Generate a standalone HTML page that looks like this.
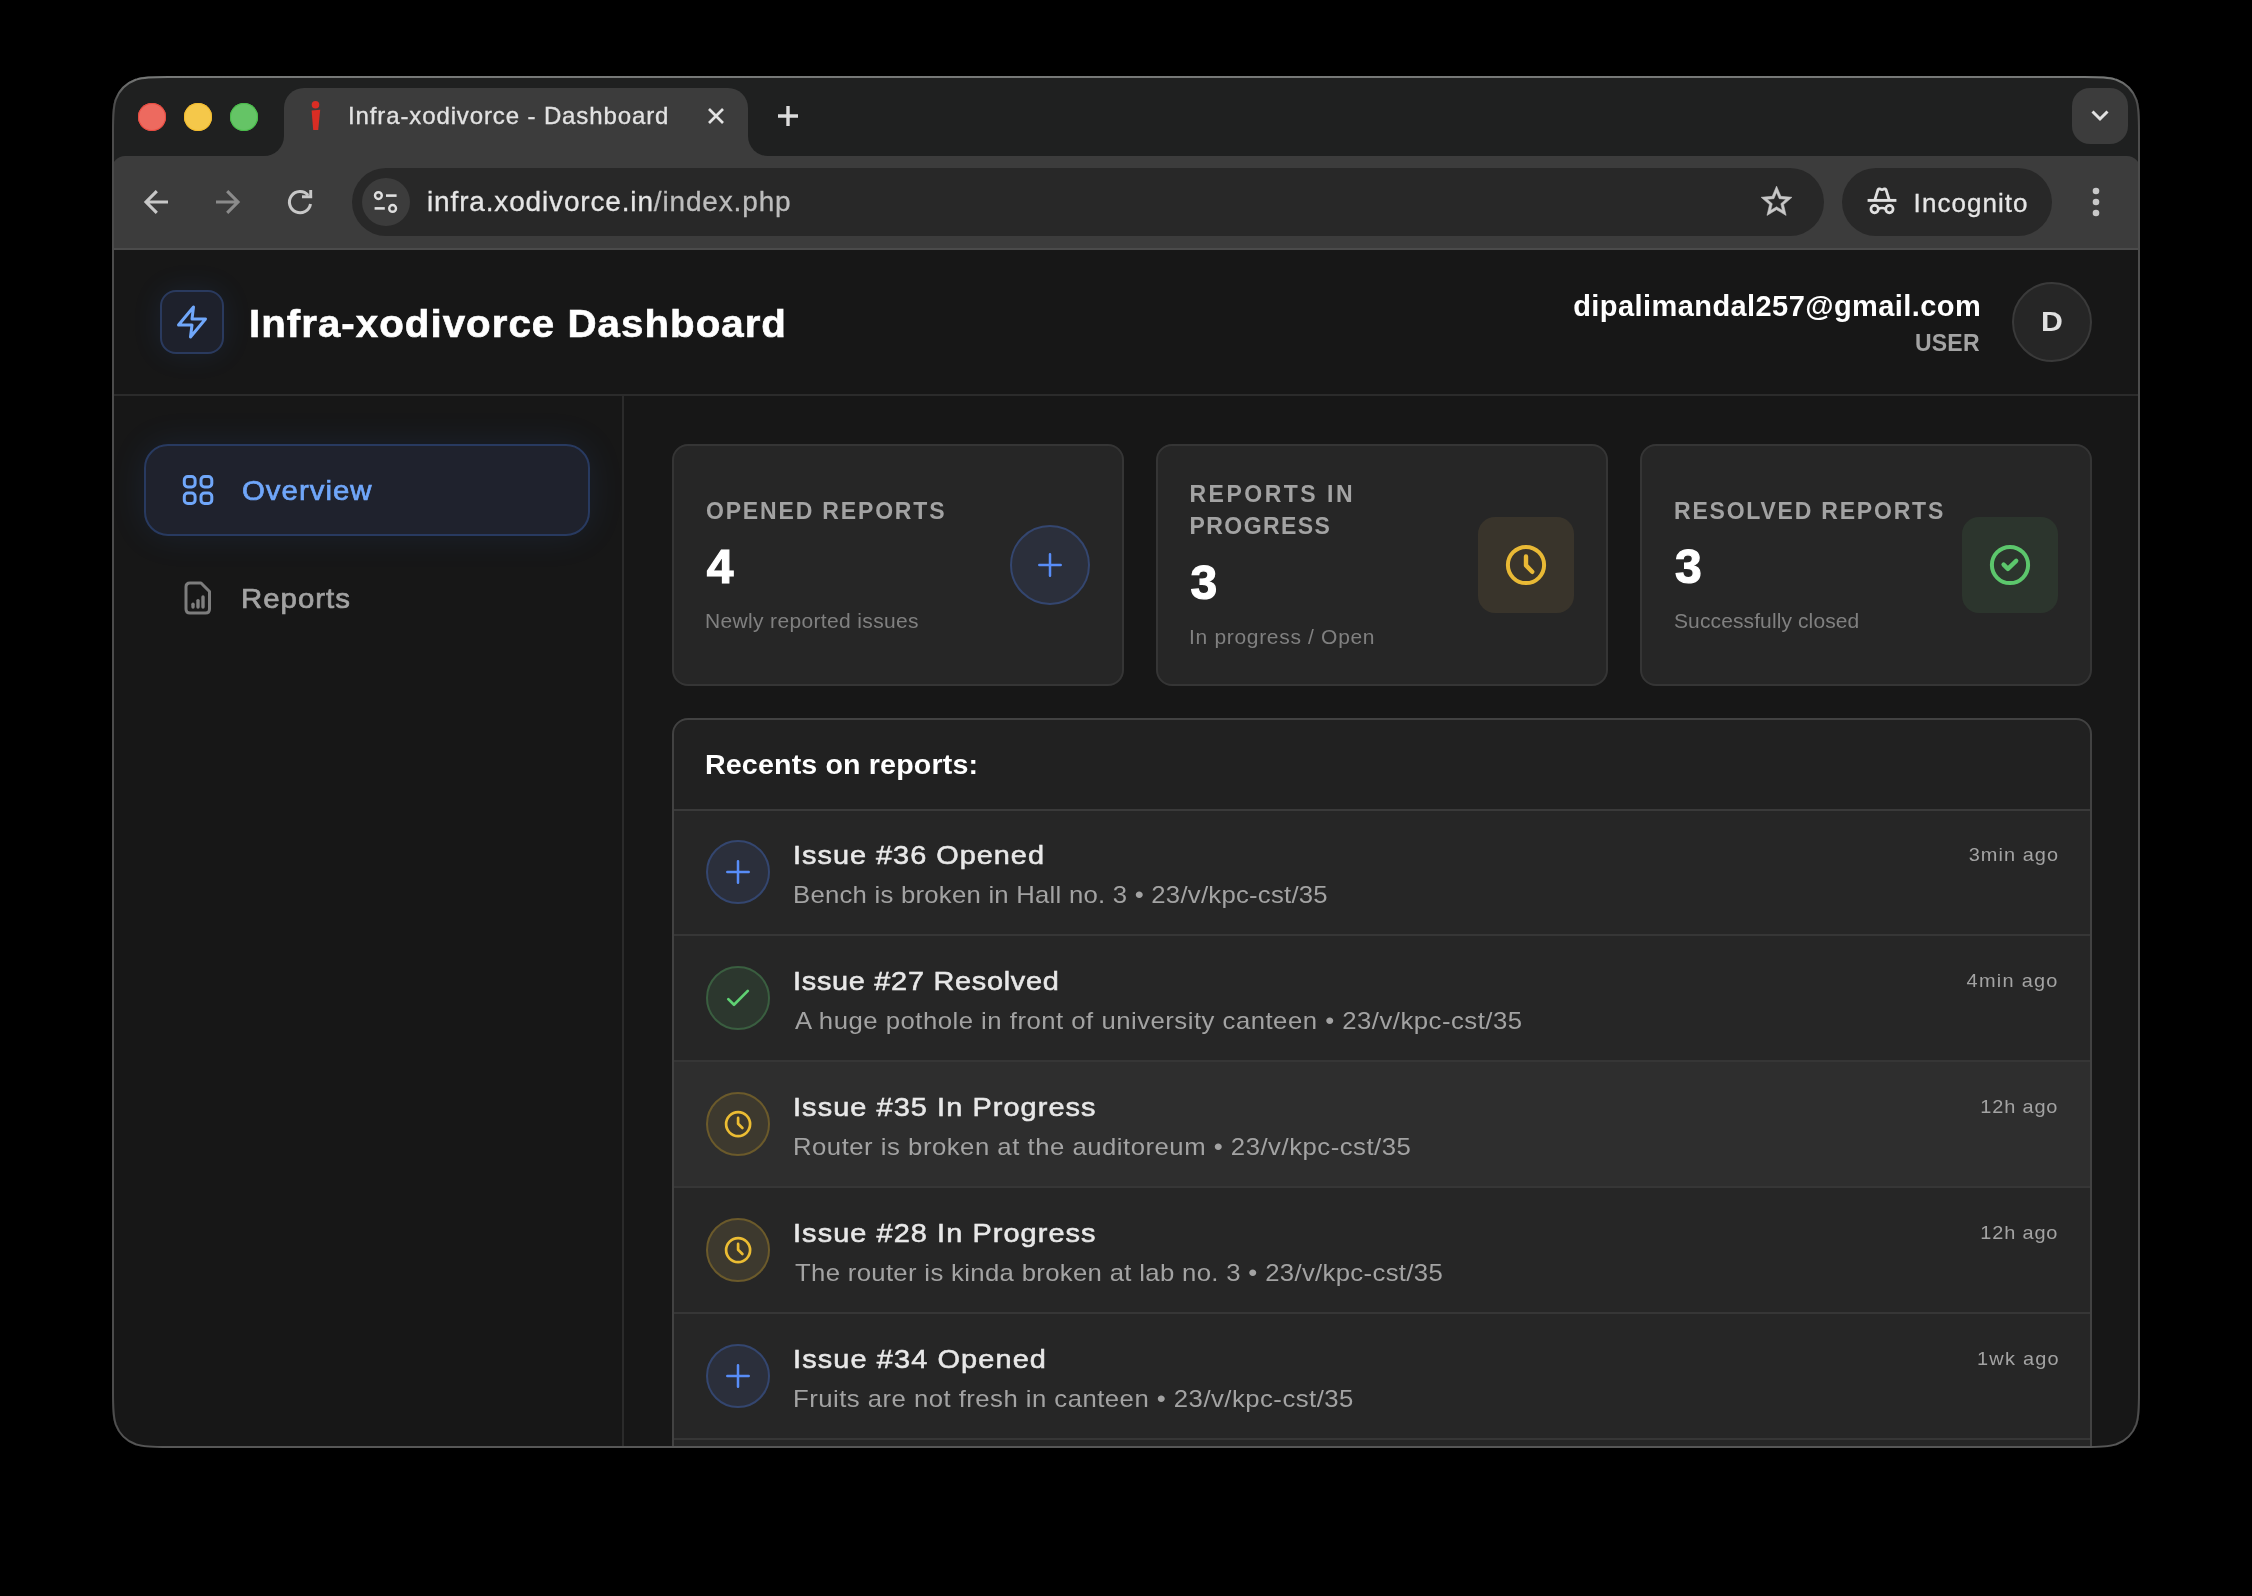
<!DOCTYPE html>
<html lang="en">
<head>
<meta charset="utf-8">
<title>Infra-xodivorce - Dashboard</title>
<style>
*{box-sizing:border-box;margin:0;padding:0}
html,body{width:2252px;height:1596px;background:#000;overflow:hidden}
body{font-family:"Liberation Sans",sans-serif;position:relative;color:#fff}
.t{position:absolute;white-space:nowrap;line-height:1;transform-origin:0 50%}
.r{position:absolute;white-space:nowrap;line-height:1;text-align:right;transform-origin:100% 50%}
svg{position:absolute;overflow:visible}
#win{position:absolute;left:112px;top:76px;width:2028px;height:1372px;background:#171717;overflow:hidden;clip-path:path('M56.56 0.00L1971.44 0.00C1987.73 0.00 1995.87 0.00 2003.21 2.42L2004.63 2.77C2014.21 6.26 2021.74 13.79 2025.23 23.37L2025.58 24.79C2028.00 32.13 2028.00 40.27 2028.00 56.56L2028.00 1315.44C2028.00 1331.73 2028.00 1339.87 2025.58 1347.21L2025.23 1348.63C2021.74 1358.21 2014.21 1365.74 2004.63 1369.23L2003.21 1369.58C1995.87 1372.00 1987.73 1372.00 1971.44 1372.00L56.56 1372.00C40.27 1372.00 32.13 1372.00 24.79 1369.58L23.37 1369.23C13.79 1365.74 6.26 1358.21 2.77 1348.63L2.42 1347.21C0.00 1339.87 0.00 1331.73 0.00 1315.44L0.00 56.56C0.00 40.27 0.00 32.13 2.42 24.79L2.77 23.37C6.26 13.79 13.79 6.26 23.37 2.77L24.79 2.42C32.13 0.00 40.27 0.00 56.56 0.00Z')}
#o{position:absolute;left:-112px;top:-76px;width:2252px;height:1596px;will-change:transform}
#o div{position:absolute}
#titlebar{left:112px;top:76px;width:2028px;height:90px;background:#1f2020}
#toolbar{left:112px;top:156px;width:2028px;height:94px;background:#3c3c3c;border-radius:13px 13px 0 0}
#tbline{left:112px;top:248px;width:2028px;height:2px;background:#4b4b4b}
#tab{left:284px;top:88px;width:464px;height:70px;background:#3c3c3c;border-radius:20px 20px 0 0}
.flare{top:136px;width:20px;height:20px;background:#3c3c3c}
.flare i{position:absolute;left:0;top:0;width:20px;height:20px;background:#1f2020}
#fl{left:264px}#fl i{border-radius:0 0 20px 0}
#fr{left:748px}#fr i{border-radius:0 0 0 20px}
.dot{top:102.8px;width:28px;height:28px;border-radius:50%}
#url{left:352px;top:168px;width:1472px;height:68px;border-radius:34px;background:#282828}
#site{left:362px;top:178px;width:48px;height:48px;border-radius:24px;background:#3c3c3c}
#incog{left:1842px;top:168px;width:210px;height:68px;border-radius:34px;background:#282828}
#dd{left:2072px;top:88px;width:56px;height:56px;border-radius:18px;background:#3c3c3c}
#page{left:112px;top:250px;width:2028px;height:1200px;background:#171717}
.ln{background:#2b2b2b}
.card{background:#262626;border:2px solid #353535;border-radius:16px}
.row{left:674px;width:1416px;height:124px;background:#262626}
.dv{left:674px;width:1416px;height:2px;background:#363636}
.ic{width:64px;height:64px;border-radius:50%;left:706px;border:2px solid}
.ib{background:#2b2f3b;border-color:#34466f}
.ig{background:#2c372e;border-color:#3a5e40}
.iy{background:#3d392e;border-color:#6b5a2b}
</style>
</head>
<body>
<div id="win"><div id="o">
  <div id="titlebar"></div>
  <div id="toolbar"></div>
  <div id="tbline"></div>
  <div class="flare" id="fl"><i></i></div>
  <div class="flare" id="fr"><i></i></div>
  <div id="tab"></div>
  <div class="dot" style="left:138px;background:#ed6a5f;box-shadow:inset 0 0 0 1px #e9493f"></div>
  <div class="dot" style="left:184px;background:#f5c84a;box-shadow:inset 0 0 0 1px #f2ba2c"></div>
  <div class="dot" style="left:230px;background:#65c466;box-shadow:inset 0 0 0 1px #48bd49"></div>
  <div id="url"></div>
  <div id="site"></div>
  <div id="incog"></div>
  <div id="dd"></div>
  <!-- tab contents -->
  <svg style="left:303px;top:95px" width="24" height="40" viewBox="0 0 24 40"><circle cx="12.5" cy="9.7" r="3.8" fill="#da2d24"/><path d="M8.6 15.6 L17.2 14.8 L15.2 35.1 L10.2 35.1 Z" fill="#da2d24"/></svg>
  <svg style="left:707px;top:106.7px" width="18" height="18" viewBox="0 0 18 18"><path d="M2 2 L16 16 M16 2 L2 16" stroke="#e2e2e2" stroke-width="2.7" fill="none"/></svg>
  <svg style="left:777px;top:104.7px" width="22" height="22" viewBox="0 0 22 22"><path d="M11 1 V21 M1 11 H21" stroke="#dcdcdc" stroke-width="3.4" fill="none"/></svg>
  <svg style="left:2088px;top:107px" width="24" height="18" viewBox="0 0 24 18"><path d="M4.5 4.5 L12 12 L19.5 4.5" stroke="#e2e2e2" stroke-width="3" fill="none"/></svg>
  <!-- nav icons -->
  <svg style="left:142px;top:188px" width="28" height="28" viewBox="0 0 28 28"><path d="M26 14 H4.5 M14.8 3.2 L4 14 L14.8 24.8" stroke="#c8c8c8" stroke-width="3.1" fill="none"/></svg>
  <svg style="left:214px;top:188px" width="28" height="28" viewBox="0 0 28 28"><path d="M2 14 H23.5 M13.2 3.2 L24 14 L13.2 24.8" stroke="#8b8b8b" stroke-width="3.1" fill="none"/></svg>
  <svg style="left:286px;top:188px" width="28" height="28" viewBox="0 0 28 28"><path d="M22.1 7.3 A10.6 10.6 0 1 0 24.5 16" stroke="#c8c8c8" stroke-width="3" fill="none"/><path d="M24.7 2 V10.2 M16 8.8 H26.2" stroke="#c8c8c8" stroke-width="2.9" fill="none"/></svg>
  <!-- site info icon -->
  <svg style="left:372.3px;top:188.4px" width="28" height="28" viewBox="0 0 28 28"><circle cx="6.4" cy="7.6" r="3.4" stroke="#e0e0e0" stroke-width="2.4" fill="none"/><path d="M14 7.6 H24.6" stroke="#e0e0e0" stroke-width="2.6"/><path d="M2.6 20.4 H12.8" stroke="#e0e0e0" stroke-width="2.6"/><circle cx="20.6" cy="20.4" r="3.4" stroke="#e0e0e0" stroke-width="2.4" fill="none"/></svg>
  <!-- star -->
  <svg style="left:1757.6px;top:183.2px" width="37.1" height="37.1" viewBox="0 0 24 24"><path d="M22 9.24l-7.19-.62L12 2 9.19 8.63 2 9.24l5.46 4.73L5.82 21 12 17.27 18.18 21l-1.63-7.03L22 9.24zM12 15.4l-3.76 2.27 1-4.28-3.32-2.88 4.38-.38L12 6.1l1.71 4.04 4.38.38-3.32 2.88 1 4.28L12 15.4z" fill="#c8c8c8" stroke="#c8c8c8" stroke-width="0.35"/></svg>
  <!-- incognito -->
  <svg style="left:1866px;top:186px" width="32" height="30" viewBox="0 0 32 30"><path d="M8.8 14.2 L12 3.7 Q12.4 2.5 13.6 2.9 L15.2 3.5 Q16 3.8 16.8 3.5 L18.4 2.9 Q19.6 2.5 20 3.7 L23.2 14.2" stroke="#e0e0e0" stroke-width="2.8" fill="none"/><path d="M1.6 14.4 H30.4" stroke="#e0e0e0" stroke-width="2.9"/><circle cx="8.6" cy="23.1" r="3.7" stroke="#e0e0e0" stroke-width="2.7" fill="none"/><circle cx="23.4" cy="23.1" r="3.7" stroke="#e0e0e0" stroke-width="2.7" fill="none"/><path d="M12.3 22.7 Q16 21.3 19.7 22.7" stroke="#e0e0e0" stroke-width="2.6" fill="none"/></svg>
  <!-- menu dots -->
  <svg style="left:2088px;top:182px" width="16" height="40" viewBox="0 0 16 40"><circle cx="8" cy="9" r="3.3" fill="#c8c8c8"/><circle cx="8" cy="20" r="3.3" fill="#c8c8c8"/><circle cx="8" cy="31" r="3.3" fill="#c8c8c8"/></svg>
  <div id="page"></div>
  <!-- header -->
  <div class="ln" style="left:112px;top:394px;width:2028px;height:2px"></div>
  <div class="ln" style="left:622px;top:396px;width:2px;height:1060px"></div>
  <div style="left:160px;top:290px;width:64px;height:64px;border-radius:16px;background:#1e212c;border:2px solid #2a3a5e;box-shadow:0 0 30px rgba(59,130,246,0.10)"></div>
  <svg style="left:174px;top:304px" width="36" height="36" viewBox="0 0 24 24"><path d="M13 2 L3 14 H12 L11 22 L21 10 H12 Z" stroke="#70a7fa" stroke-width="2" fill="none" stroke-linejoin="round" stroke-linecap="round"/></svg>
  <div style="left:2012px;top:282px;width:80px;height:80px;border-radius:50%;background:#262626;border:2px solid #3a3a3a"></div>
  <!-- sidebar -->
  <div style="left:144px;top:444px;width:446px;height:92px;border-radius:24px;background:#1f222d;border:2px solid #283a60;box-shadow:0 0 36px rgba(59,130,246,0.10)"></div>
  <svg style="left:181px;top:473px" width="34" height="34" viewBox="0 0 34 34"><g stroke="#70a7fa" stroke-width="3" fill="none"><rect x="3.3" y="3.5" width="10.8" height="10.4" rx="3.5"/><rect x="20" y="3.5" width="10.8" height="10.4" rx="3.5"/><rect x="3.3" y="20" width="10.8" height="10.4" rx="3.5"/><rect x="20" y="20" width="10.8" height="10.4" rx="3.5"/></g></svg>
  <svg style="left:180px;top:580px" width="36" height="36" viewBox="0 0 36 36"><g stroke="#7d7d7d" stroke-width="3" fill="none" stroke-linejoin="round" stroke-linecap="round"><path d="M10 3 H21 L29.5 11.5 V29 Q29.5 33 25.5 33 H10 Q6 33 6 29 V7 Q6 3 10 3 Z"/></g><g stroke="#7f7f7f" stroke-width="3.4" stroke-linecap="round"><path d="M13 27 V24.2"/><path d="M18 27 V20.6"/><path d="M23 27 V17"/></g></svg>
  <!-- stat cards -->
  <div class="card" style="left:672px;top:444px;width:452px;height:242px"></div>
  <div class="card" style="left:1156px;top:444px;width:452px;height:242px"></div>
  <div class="card" style="left:1640px;top:444px;width:452px;height:242px"></div>
  <div style="left:1010px;top:525px;width:80px;height:80px;border-radius:50%;background:#2b2f3b;border:2px solid #34466f"></div>
  <svg style="left:1036px;top:551px" width="28" height="28" viewBox="0 0 28 28"><path d="M14 3.3 V24.7 M3.3 14 H24.7" stroke="#588df8" stroke-width="2.5" fill="none" stroke-linecap="round"/></svg>
  <div style="left:1478px;top:517px;width:96px;height:96px;border-radius:17px;background:#39342b"></div>
  <svg style="left:1504px;top:543px" width="44" height="44" viewBox="0 0 44 44"><circle cx="22" cy="22" r="18.1" stroke="#e9b935" stroke-width="4" fill="none"/><path d="M22 13.4 V22.4 L28.2 28.8" stroke="#e9b935" stroke-width="4.4" fill="none" stroke-linecap="round" stroke-linejoin="round"/></svg>
  <div style="left:1962px;top:517px;width:96px;height:96px;border-radius:17px;background:#2c352d"></div>
  <svg style="left:1988px;top:543px" width="44" height="44" viewBox="0 0 44 44"><circle cx="22" cy="22" r="18.1" stroke="#5cc76c" stroke-width="4" fill="none"/><path d="M15.6 21.6 L19.9 25.9 L28.2 17.9" stroke="#5cc76c" stroke-width="4.4" fill="none" stroke-linecap="round" stroke-linejoin="round"/></svg>
  <!-- recents card -->
  <div style="left:672px;top:718px;width:1420px;height:760px;border-radius:16px;background:#212121;border:2px solid #424242"></div>
  <div class="dv" style="top:808.5px;background:#3a3a3a"></div>
  <div class="row" style="top:810.5px"></div>
  <div class="dv" style="top:934px"></div>
  <div class="row" style="top:936px"></div>
  <div class="dv" style="top:1060px"></div>
  <div class="row" style="top:1062px;background:#2e2e2e"></div>
  <div class="dv" style="top:1186px"></div>
  <div class="row" style="top:1188px"></div>
  <div class="dv" style="top:1312px"></div>
  <div class="row" style="top:1314px"></div>
  <div class="dv" style="top:1438px"></div>
  <div class="row" style="top:1440px"></div>
  <!-- row icons -->
  <div class="ic ib" style="top:840px"></div>
  <svg style="left:724px;top:858px" width="28" height="28" viewBox="0 0 28 28"><path d="M14 3.3 V24.7 M3.3 14 H24.7" stroke="#588df8" stroke-width="2.5" fill="none" stroke-linecap="round"/></svg>
  <div class="ic ig" style="top:966px"></div>
  <svg style="left:724px;top:984px" width="28" height="28" viewBox="0 0 28 28"><path d="M4.3 15.1 L10 20.8 L23.8 6.9" stroke="#5fd173" stroke-width="2.7" fill="none" stroke-linecap="round" stroke-linejoin="round"/></svg>
  <div class="ic iy" style="top:1092px"></div>
  <svg style="left:724px;top:1110px" width="28" height="28" viewBox="0 0 28 28"><circle cx="14.1" cy="14.1" r="12" stroke="#ecbd33" stroke-width="2.7" fill="none"/><path d="M14.1 7.9 V13.7 L18.4 18" stroke="#ecbd33" stroke-width="2.7" fill="none" stroke-linecap="round" stroke-linejoin="round"/></svg>
  <div class="ic iy" style="top:1218px"></div>
  <svg style="left:724px;top:1236px" width="28" height="28" viewBox="0 0 28 28"><circle cx="14.1" cy="14.1" r="12" stroke="#ecbd33" stroke-width="2.7" fill="none"/><path d="M14.1 7.9 V13.7 L18.4 18" stroke="#ecbd33" stroke-width="2.7" fill="none" stroke-linecap="round" stroke-linejoin="round"/></svg>
  <div class="ic ib" style="top:1344px"></div>
  <svg style="left:724px;top:1362px" width="28" height="28" viewBox="0 0 28 28"><path d="M14 3.3 V24.7 M3.3 14 H24.7" stroke="#588df8" stroke-width="2.5" fill="none" stroke-linecap="round"/></svg>

<div class="t" id="tabtitle" style="top:104.48px;font-size:24px;color:#e2e2e2;letter-spacing:0.880px;-webkit-text-stroke:0.35px #e2e2e2;left:348.00px;">Infra-xodivorce - Dashboard</div>
<div class="t" id="urltext" style="top:188.10px;font-size:28px;color:#e6e6e6;letter-spacing:0.841px;-webkit-text-stroke:0.3px #e6e6e6;left:427.05px;">infra.xodivorce.in<span style="color:#bdbdbd;-webkit-text-stroke-color:#bdbdbd">/index.php</span></div>
<div class="t" id="incogtext" style="top:189.99px;font-size:26px;color:#e6e6e6;letter-spacing:1.042px;-webkit-text-stroke:0.3px #e6e6e6;left:1913.62px;">Incognito</div>
<div class="t" id="title" style="top:304.63px;font-size:38px;color:#ffffff;font-weight:700;letter-spacing:0.959px;-webkit-text-stroke:0.6px #ffffff;transform:scaleX(1.06);left:248.50px;">Infra-xodivorce Dashboard</div>
<div class="r" id="email" style="top:291.85px;font-size:29px;color:#ffffff;font-weight:700;letter-spacing:0.427px;right:270.79px;">dipalimandal257@gmail.com</div>
<div class="r" id="role" style="top:331.63px;font-size:23px;color:#a3a3a3;font-weight:700;letter-spacing:0.236px;right:272.25px;">USER</div>
<div class="t" id="avD" style="top:308.94px;font-size:27px;color:#e0e0e0;font-weight:700;transform:scaleX(1.12);left:2040.98px;">D</div>
<div class="t" id="ov" style="top:476.70px;font-size:28px;color:#70a7fa;letter-spacing:0.953px;-webkit-text-stroke:0.7px #70a7fa;transform:scaleX(1.05);left:242.33px;">Overview</div>
<div class="t" id="rp" style="top:584.80px;font-size:28px;color:#a3a3a3;letter-spacing:0.938px;-webkit-text-stroke:0.7px #a3a3a3;transform:scaleX(1.05);left:241.33px;">Reports</div>
<div class="t" id="c1l" style="top:499.63px;font-size:23px;color:#a3a3a3;font-weight:700;letter-spacing:1.841px;left:705.91px;">OPENED REPORTS</div>
<div class="t" id="c1n" style="top:543.27px;font-size:48px;color:#ffffff;font-weight:700;-webkit-text-stroke:1.2px #ffffff;left:706.81px;">4</div>
<div class="t" id="c1s" style="top:611.27px;font-size:20px;color:#808080;letter-spacing:0.332px;transform:scaleX(1.05);left:704.86px;">Newly reported issues</div>
<div class="t" id="c2l1" style="top:483.43px;font-size:23px;color:#a3a3a3;font-weight:700;letter-spacing:2.504px;left:1189.48px;">REPORTS IN</div>
<div class="t" id="c2l2" style="top:514.93px;font-size:23px;color:#a3a3a3;font-weight:700;letter-spacing:1.440px;left:1189.48px;">PROGRESS</div>
<div class="t" id="c2n" style="top:559.47px;font-size:48px;color:#ffffff;font-weight:700;-webkit-text-stroke:1.2px #ffffff;left:1190.38px;">3</div>
<div class="t" id="c2s" style="top:627.27px;font-size:20px;color:#808080;letter-spacing:0.650px;transform:scaleX(1.05);left:1189.43px;">In progress / Open</div>
<div class="t" id="c3l" style="top:499.63px;font-size:23px;color:#a3a3a3;font-weight:700;letter-spacing:1.790px;left:1674.00px;">RESOLVED REPORTS</div>
<div class="t" id="c3n" style="top:543.27px;font-size:48px;color:#ffffff;font-weight:700;-webkit-text-stroke:1.2px #ffffff;left:1674.90px;">3</div>
<div class="t" id="c3s" style="top:611.27px;font-size:20px;color:#808080;letter-spacing:0.107px;transform:scaleX(1.05);left:1674.10px;">Successfully closed</div>
<div class="t" id="rh" style="top:750.92px;font-size:27.5px;color:#ffffff;font-weight:700;letter-spacing:0.151px;transform:scaleX(1.04);left:705.25px;">Recents on reports:</div>
<div class="t" id="r0t" style="top:841.87px;font-size:26.5px;color:#e8e8e8;letter-spacing:0.912px;-webkit-text-stroke:0.55px #e8e8e8;transform:scaleX(1.09);left:793.20px;">Issue #36 Opened</div>
<div class="t" id="r0s" style="top:883.18px;font-size:24px;color:#a3a3a3;letter-spacing:0.239px;transform:scaleX(1.07);left:793.41px;">Bench is broken in Hall no. 3 • 23/v/kpc-cst/35</div>
<div class="r" id="r0m" style="top:844.62px;font-size:19px;color:#a3a3a3;letter-spacing:0.997px;transform:scaleX(1.05);right:192.60px;">3min ago</div>
<div class="t" id="r1t" style="top:967.92px;font-size:26.5px;color:#e8e8e8;letter-spacing:0.652px;-webkit-text-stroke:0.55px #e8e8e8;transform:scaleX(1.09);left:793.20px;">Issue #27 Resolved</div>
<div class="t" id="r1s" style="top:1009.23px;font-size:24px;color:#a3a3a3;letter-spacing:0.474px;transform:scaleX(1.07);left:795.38px;">A huge pothole in front of university canteen • 23/v/kpc-cst/35</div>
<div class="r" id="r1m" style="top:970.67px;font-size:19px;color:#a3a3a3;letter-spacing:1.187px;transform:scaleX(1.05);right:193.30px;">4min ago</div>
<div class="t" id="r2t" style="top:1093.97px;font-size:26.5px;color:#e8e8e8;letter-spacing:0.990px;-webkit-text-stroke:0.55px #e8e8e8;transform:scaleX(1.09);left:793.20px;">Issue #35 In Progress</div>
<div class="t" id="r2s" style="top:1135.28px;font-size:24px;color:#a3a3a3;letter-spacing:0.485px;transform:scaleX(1.07);left:793.41px;">Router is broken at the auditoreum • 23/v/kpc-cst/35</div>
<div class="r" id="r2m" style="top:1096.72px;font-size:19px;color:#a3a3a3;letter-spacing:0.799px;transform:scaleX(1.05);right:193.71px;">12h ago</div>
<div class="t" id="r3t" style="top:1220.02px;font-size:26.5px;color:#e8e8e8;letter-spacing:0.990px;-webkit-text-stroke:0.55px #e8e8e8;transform:scaleX(1.09);left:793.20px;">Issue #28 In Progress</div>
<div class="t" id="r3s" style="top:1261.33px;font-size:24px;color:#a3a3a3;letter-spacing:0.320px;transform:scaleX(1.07);left:795.38px;">The router is kinda broken at lab no. 3 • 23/v/kpc-cst/35</div>
<div class="r" id="r3m" style="top:1222.77px;font-size:19px;color:#a3a3a3;letter-spacing:0.799px;transform:scaleX(1.05);right:193.71px;">12h ago</div>
<div class="t" id="r4t" style="top:1346.07px;font-size:26.5px;color:#e8e8e8;letter-spacing:1.028px;-webkit-text-stroke:0.55px #e8e8e8;transform:scaleX(1.09);left:793.20px;">Issue #34 Opened</div>
<div class="t" id="r4s" style="top:1387.38px;font-size:24px;color:#a3a3a3;letter-spacing:0.452px;transform:scaleX(1.07);left:793.41px;">Fruits are not fresh in canteen • 23/v/kpc-cst/35</div>
<div class="r" id="r4m" style="top:1348.82px;font-size:19px;color:#a3a3a3;letter-spacing:1.165px;transform:scaleX(1.05);right:192.42px;">1wk ago</div>
</div></div>
<svg style="left:0;top:0" width="2252" height="1596" viewBox="0 0 2252 1596"><defs><linearGradient id="wb" x1="0" y1="76" x2="0" y2="1448" gradientUnits="userSpaceOnUse"><stop offset="0" stop-color="#787a79"/><stop offset="0.02" stop-color="#4c4c4c"/><stop offset="0.975" stop-color="#4c4c4c"/><stop offset="1" stop-color="#575757"/></linearGradient></defs><path d="M168.03 77.00L2083.97 77.00C2099.81 77.00 2107.74 77.00 2114.88 79.36L2116.27 79.70C2125.58 83.09 2132.91 90.42 2136.30 99.73L2136.64 101.12C2139.00 108.26 2139.00 116.19 2139.00 132.03L2139.00 1391.97C2139.00 1407.81 2139.00 1415.74 2136.64 1422.88L2136.30 1424.27C2132.91 1433.58 2125.58 1440.91 2116.27 1444.30L2114.88 1444.64C2107.74 1447.00 2099.81 1447.00 2083.97 1447.00L168.03 1447.00C152.19 1447.00 144.26 1447.00 137.12 1444.64L135.73 1444.30C126.42 1440.91 119.09 1433.58 115.70 1424.27L115.36 1422.88C113.00 1415.74 113.00 1407.81 113.00 1391.97L113.00 132.03C113.00 116.19 113.00 108.26 115.36 101.12L115.70 99.73C119.09 90.42 126.42 83.09 135.73 79.70L137.12 79.36C144.26 77.00 152.19 77.00 168.03 77.00Z" fill="none" stroke="url(#wb)" stroke-width="2"/></svg>
</body>
</html>
